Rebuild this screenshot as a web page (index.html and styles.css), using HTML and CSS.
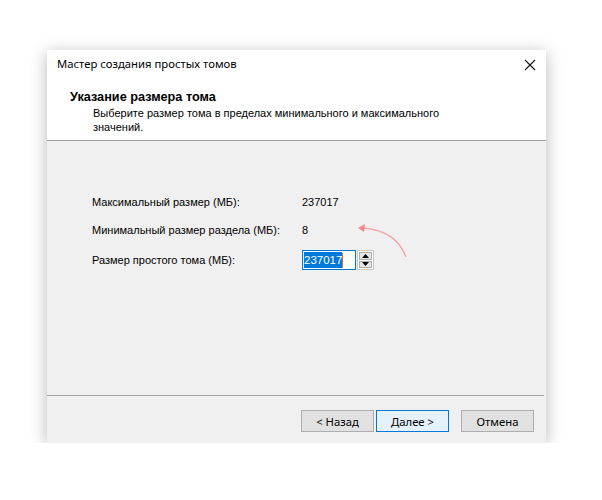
FILE: index.html
```html
<!DOCTYPE html>
<html lang="ru">
<head>
<meta charset="utf-8">
<title>Мастер создания простых томов</title>
<link rel="stylesheet" href="styles.css">
</head>
<body>
<div class="page">
  <div class="window">
    <div class="titlebar">
      <span class="title">Мастер создания простых томов</span>
      <svg class="close" width="12" height="12" viewBox="0 0 12 12"><path d="M1 1L11 11M11 1L1 11" stroke="#111" stroke-width="1.1" fill="none"/></svg>
    </div>
    <div class="header">
      <div class="heading">Указание размера тома</div>
      <div class="subtitle">Выберите размер тома в пределах минимального и максимального<br>значений.</div>
    </div>
    <div class="body">
      <div class="form">
        <div class="row"><span class="label">Максимальный размер (МБ):</span><span class="value">237017</span></div>
        <div class="row"><span class="label">Минимальный размер раздела (МБ):</span><span class="value">8</span></div>
        <div class="row row-input"><span class="label">Размер простого тома (МБ):</span>
          <div class="spin">
            <div class="input"><span class="sel">237017</span><span class="caret"></span></div>
            <div class="spin-btns">
              <div class="spin-btn"><svg width="7" height="4" viewBox="0 0 7 4"><path d="M0 4L3.5 0L7 4Z" fill="#000"/></svg></div>
              <div class="spin-btn"><svg width="7" height="4" viewBox="0 0 7 4"><path d="M0 0L3.5 4L7 0Z" fill="#000"/></svg></div>
            </div>
          </div>
        </div>
        <svg class="arrow" width="60" height="45" viewBox="0 0 60 45"><path d="M53 41C47 26 36 14 10 12" stroke="#f4a3a3" stroke-width="1.4" fill="none"/><path d="M5 12L12 8L11 16Z" fill="#f08a8a"/></svg>
      </div>
      <div class="footer">
        <button class="btn">&lt; Назад</button>
        <button class="btn btn-default">Далее &gt;</button>
        <button class="btn btn-cancel">Отмена</button>
      </div>
    </div>
  </div>
</div>
</body>
</html>
```
FILE: styles.css
```css
html, body {
  margin: 0;
  padding: 0;
  background: #ffffff;
}
body {
  font-family: "Liberation Sans", Arial, sans-serif;
  font-size: 11px;
  color: #000;
}
.page {
  padding: 50px 0 0 47px;
}
.window {
  width: 499px;
  height: 393px;
  background: #f0f0f0;
  box-shadow: 0 3px 16px rgba(0, 0, 0, 0.28);
  display: flex;
  flex-direction: column;
}
.titlebar {
  height: 30px;
  box-sizing: border-box;
  padding: 6px 0 0 10px;
  background: #fff;
  display: flex;
  justify-content: space-between;
  line-height: 16px;
}
.title {
  font-family: "Noto Sans", sans-serif;
  font-size: 11.3px;
}
.close {
  margin: 3px 10px 0 0;
}
.header {
  height: 61px;
  box-sizing: border-box;
  background: #fff;
  border-bottom: 1px solid #a0a0a0;
  padding: 9px 0 0 23px;
}
.heading {
  font-weight: bold;
  font-size: 12.7px;
  line-height: 16px;
  margin-bottom: 1px;
}
.subtitle {
  line-height: 14px;
  padding-left: 23px;
}
.body {
  flex: 1;
  display: flex;
  flex-direction: column;
}
.form {
  flex: 1;
  position: relative;
  padding: 53px 0 0 45px;
  display: flex;
  flex-direction: column;
  gap: 12px;
}
.row {
  display: flex;
  line-height: 16px;
}
.row-input {
  align-items: center;
}
.label {
  width: 210px;
}
.spin {
  display: flex;
  gap: 1px;
}
.input {
  width: 54px;
  height: 20px;
  box-sizing: border-box;
  border: 1px solid #0078d7;
  background: #fff;
  display: flex;
  align-items: center;
  padding-left: 1px;
}
.sel {
  background: #0078d7;
  color: #fff;
  font-size: 11.5px;
  line-height: 16px;
}
.caret {
  width: 1px;
  height: 15px;
  background: #e07020;
}
.spin-btns {
  width: 17px;
  height: 20px;
  box-sizing: border-box;
  border: 1px solid #c8c8c8;
  background: #fff;
  padding: 1px;
  display: flex;
  flex-direction: column;
  gap: 1px;
}
.spin-btn {
  flex: 1;
  background: #e6e6e6;
  border: 1px solid #adadad;
  display: flex;
  align-items: center;
  justify-content: center;
}
.arrow {
  position: absolute;
  left: 306px;
  top: 75px;
}
.footer {
  border-top: 1px solid #a0a0a0;
  margin-right: 2px;
  padding: 14px 10px 11px 0;
  display: flex;
  justify-content: flex-end;
  gap: 2px;
}
.btn {
  width: 73px;
  height: 22px;
  box-sizing: border-box;
  border: 1px solid #adadad;
  background: #e1e1e1;
  font-family: "Noto Sans", sans-serif;
  font-size: 11.3px;
  padding: 0;
  color: #000;
}
.btn-default {
  border-color: #0078d7;
  background: #e5f1fb;
}
.btn-cancel {
  margin-left: 10px;
}
```
